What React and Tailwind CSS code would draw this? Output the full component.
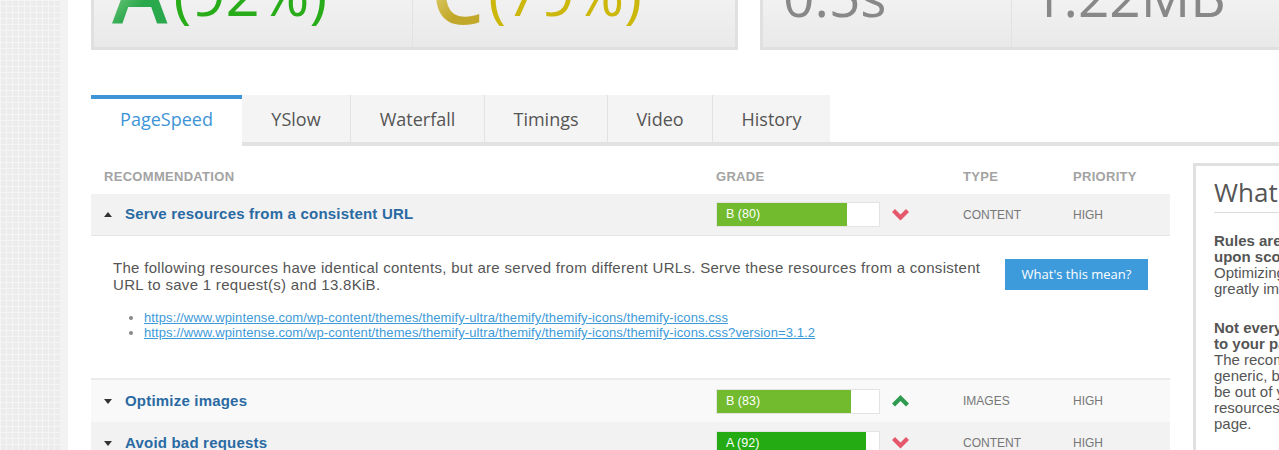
import React from "react";

const arial = "font-['Liberation_Sans',Arial,sans-serif]";
const open = "font-['Open_Sans',sans-serif]";

function Chevron({ up, color }) {
  return (
    <svg width="17" height="12" viewBox="0 0 17 12" className="shrink-0">
      {up ? (
        <polygon points="0,8.5 3,11.5 8.5,6 14,11.5 17,8.5 8.5,0" fill={color} />
      ) : (
        <polygon points="0,3 3,0 8.5,5.5 14,0 17,3 8.5,11.5" fill={color} />
      )}
    </svg>
  );
}

function Tri({ up }) {
  return (
    <svg width="8" height="5" viewBox="0 0 8 5" className="shrink-0">
      {up ? <polygon points="0,5 8,5 4,0" fill="#333" /> : <polygon points="0,0 8,0 4,5" fill="#333" />}
    </svg>
  );
}

function Row({ title, open: isOpen, grade, pct, fill, up, type, bg }) {
  return (
    <div className={`flex items-center h-[42px] ${bg} ${arial}`}>
      <div className="w-[612px] pl-[13px] flex items-center gap-[13px]">
        <Tri up={isOpen} />
        <span className="text-[15px] tracking-[0.2px] font-bold text-[#2a6aa3]">{title}</span>
      </div>
      <div className="w-[247px] pl-[13px] flex items-center gap-[12px]">
        <div className="w-[164px] h-[25px] border border-[#e3e3e3] bg-white flex">
          <div className={`h-full flex items-center pl-[9px] text-[12.5px] text-white ${fill}`} style={{ width: `${pct}%` }}>
            {grade}
          </div>
        </div>
        <Chevron up={up} color={up ? "#2e9b50" : "#e5576a"} />
      </div>
      <div className="w-[110px] pl-[13px] text-[12px] text-[#777]">{type}</div>
      <div className="flex-1 pl-[13px] text-[12px] text-[#777]">HIGH</div>
    </div>
  );
}

export default function App() {
  const tabs = [
    ["YSlow", "w-[109px]"],
    ["Waterfall", "w-[134px]"],
    ["Timings", "w-[123px]"],
    ["Video", "w-[105px]"],
    ["History", "w-[117px]"],
  ];
  return (
    <div className="flex w-[1279px] h-[450px] overflow-hidden bg-white">
      <div className="w-[60px] shrink-0 bg-[#ececec] bg-[linear-gradient(90deg,#f5f5f5_1px,transparent_1px),linear-gradient(#f5f5f5_1px,transparent_1px)] bg-[size:6px_6px]" />
      <div className="w-[8px] shrink-0 bg-[#f3f3f3]" />
      <div className="flex flex-col w-[1400px] shrink-0 pl-[23px]">
        {/* score panels */}
        <div className="flex gap-[22px] h-[50px]">
          <div className="w-[647px] flex border-[3px] border-t-0 border-[#e0e0e0] bg-[linear-gradient(#f1f1f1,#e9e9e9)]">
            <div className="w-[319px] border-r border-[#e2e2e2] flex items-end pl-[18px] overflow-hidden">
              <span className={`${open} font-semibold text-[84px] leading-none mb-[13px] bg-[linear-gradient(135deg,#c4ebb8,#2aa84c_60%)] bg-clip-text text-transparent`}>A</span>
              <span className={`${open} text-[60px] leading-none mb-[24px] text-[#29ac1a] ml-[6px]`}>(92%)</span>
            </div>
            <div className="flex-1 flex items-end pl-[18px] overflow-hidden">
              <span className={`${open} font-semibold text-[84px] leading-none mb-[13px] bg-[linear-gradient(135deg,#f6f0a6,#c2a82a_65%)] bg-clip-text text-transparent`}>C</span>
              <span className={`${open} text-[60px] leading-none mb-[24px] text-[#ccb70c] ml-[4px]`}>(79%)</span>
            </div>
          </div>
          <div className="w-[620px] flex border-[3px] border-t-0 border-r-0 border-[#e0e0e0] bg-[linear-gradient(#f1f1f1,#e9e9e9)]">
            <div className="w-[249px] border-r border-[#e2e2e2] flex items-end pl-[20px] overflow-hidden">
              <span className={`${open} text-[55px] leading-none mb-[24px] text-[#888]`}>0.5s</span>
            </div>
            <div className="flex-1 flex items-end pl-[20px] overflow-hidden">
              <span className={`${open} text-[55px] leading-none mb-[24px] text-[#888]`}>1.22MB</span>
            </div>
          </div>
        </div>

        {/* tabs */}
        <div className={`flex items-end mt-[45px] ${open}`}>
          <div className="w-[151px] h-[51px] bg-white border-t-4 border-[#3d94d6] flex items-center justify-center pb-[7px] text-[18px] text-[#3d94d6]">
            PageSpeed
          </div>
          {tabs.map(([t, w], i) => (
            <div
              key={t}
              className={`${w} h-[51px] bg-[#f4f4f4] border-b-4 border-b-[#e2e2e2] ${i < tabs.length - 1 ? "border-r border-r-[#e2e2e2]" : ""} flex items-center justify-center pt-[1px] text-[18px] text-[#555]`}
            >
              {t}
            </div>
          ))}
          <div className="flex-1 h-[4px] bg-[#e2e2e2]" />
        </div>

        {/* content */}
        <div className="flex gap-[23px]">
          <div className="w-[1079px] shrink-0">
            <div className={`flex items-end h-[48px] pb-[8px] text-[13px] tracking-[0.3px] font-bold text-[#a3a3a3] ${arial}`}>
              <div className="w-[612px] pl-[13px]">RECOMMENDATION</div>
              <div className="w-[247px] pl-[13px]">GRADE</div>
              <div className="w-[110px] pl-[13px]">TYPE</div>
              <div className="flex-1 pl-[13px]">PRIORITY</div>
            </div>
            <Row title="Serve resources from a consistent URL" open grade="B (80)" pct={80} fill="bg-[#72bb2f]" type="CONTENT" bg="bg-[#f2f2f2] border-b border-[#e6e6e6]" />
            <div className={`flex h-[142px] ${arial}`}>
              <div className="flex-1 pl-[22px] pt-[23px]">
                <p className="text-[15px] tracking-[0.3px] leading-[17px] text-[#555]">
                  The following resources have identical contents, but are served from different URLs. Serve these resources from a consistent
                  <br />
                  URL to save 1 request(s) and 13.8KiB.
                </p>
                <ul className="mt-[17px] pl-[31px] list-disc text-[13px] tracking-[0.1px] leading-[15px] text-[#3d9ad9] marker:text-[#888]">
                  <li>
                    <span className="underline">https://www.wpintense.com/wp-content/themes/themify-ultra/themify/themify-icons/themify-icons.css</span>
                  </li>
                  <li>
                    <span className="underline">https://www.wpintense.com/wp-content/themes/themify-ultra/themify/themify-icons/themify-icons.css?version=3.1.2</span>
                  </li>
                </ul>
              </div>
              <div className="pt-[23px] pr-[22px]">
                <div className={`w-[143px] h-[31px] bg-[#3d9bdc] text-white text-[13px] flex items-center justify-center ${open}`}>
                  What's this mean?
                </div>
              </div>
            </div>
            <div className="border-t-2 border-[#ebebeb]" />
            <Row title="Optimize images" grade="B (83)" pct={83} fill="bg-[#72bb2f]" up type="IMAGES" bg="bg-[#f9f9f9]" />
            <Row title="Avoid bad requests" grade="A (92)" pct={92} fill="bg-[#24ab14]" type="CONTENT" bg="bg-[#f2f2f2]" />
          </div>

          <div className="w-[300px] shrink-0 mt-[17px] border-[3px] border-r-0 border-b-0 border-[#e0e0e0] bg-white pl-[18px] pt-[11px]">
            <h2 className={`${open} text-[26px] leading-[30px] text-[#555] whitespace-nowrap`}>What do my scores mean?</h2>
            <div className="h-px bg-[#dcdcdc] mt-[5px]" />
            <div className={`${arial} text-[15px] leading-[16px] text-[#555] mt-[20px] whitespace-nowrap`}>
              <p>
                <b>Rules are sorted in order of impact<br />upon score</b>
                <br />
                Optimizing rules at the top of the list can<br />greatly improve your overall score.
              </p>
              <p className="mt-[23px]">
                <b>Not every recommendation will apply<br />to your page</b>
                <br />
                The recommendations are meant to be<br />generic, best practices; some things will<br />be out of your control (eg. external<br />resources) or may not apply to your<br />page.
              </p>
            </div>
          </div>
        </div>
      </div>
    </div>
  );
}
